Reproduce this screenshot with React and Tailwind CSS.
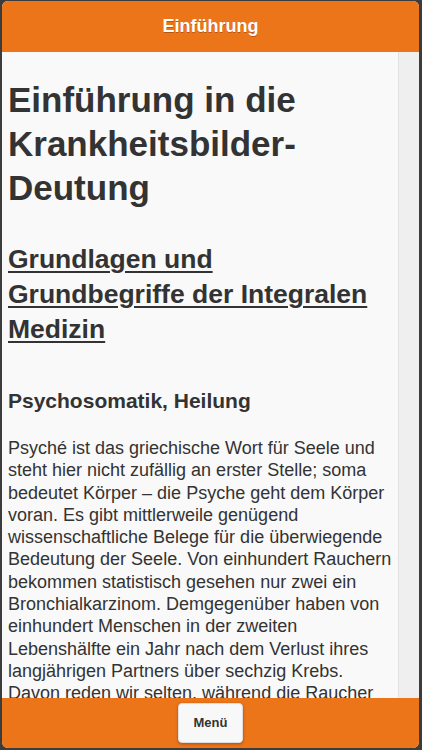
import React from 'react';

const paragraph =
  "Psyché ist das griechische Wort für Seele und steht hier nicht zufällig an erster Stelle; soma bedeutet Körper – die Psyche geht dem Körper voran. Es gibt mittlerweile genügend wissenschaftliche Belege für die überwiegende Bedeutung der Seele. Von einhundert Rauchern bekommen statistisch gesehen nur zwei ein Bronchialkarzinom. Demgegenüber haben von einhundert Menschen in der zweiten Lebenshälfte ein Jahr nach dem Verlust ihres langjährigen Partners über sechzig Krebs. Davon reden wir selten, während die Raucher ständig vor den Gefahren ihres Tuns gewarnt werden.";

const App = () => {
  return (
    <div className="w-[422px] h-[750px] bg-[#3c3c3c] pl-[2px] pr-[3px] pt-px pb-[2px] overflow-hidden font-['Liberation_Sans',Arial,sans-serif]">
      <div className="h-full flex flex-col rounded-md overflow-hidden bg-[#f9f9f9]">
        {/* Kopfzeile */}
        <header className="h-[51px] shrink-0 bg-[#ec7419] flex items-center justify-center">
          <span className="text-white font-bold text-[18px] [text-shadow:0_1px_0_rgba(0,0,0,0.25)]">Einführung</span>
        </header>

        {/* Inhalt */}
        <div className="flex-1 flex min-h-0">
          <main className="flex-1 overflow-hidden pl-[6px] pr-[4px] text-[#333]">
            <h1 className="mt-[26px] text-[35px] leading-[44px] font-bold">
              Einführung in die Krankheitsbilder-Deutung
            </h1>
            <h2 className="mt-[32px] text-[26.5px] leading-[35px] font-bold underline decoration-2 underline-offset-[3px]">
              Grundlagen und Grundbegriffe der Integralen Medizin
            </h2>
            <h3 className="mt-[41px] text-[21px] leading-[26px] font-bold">Psychosomatik, Heilung</h3>
            <p className="mt-[23px] text-[18px] leading-[22.3px]">{paragraph}</p>
          </main>
          <div className="w-[21px] shrink-0 bg-[#efefef] border-l border-[#e2e2e2]" />
        </div>

        {/* Fußzeile */}
        <footer className="h-[50px] shrink-0 bg-[#ec7419] flex items-center justify-center">
          <button className="w-[65px] h-[40px] rounded-[4px] bg-[#f8f8f8] border border-[#ddd] shadow-[0_1px_3px_rgba(0,0,0,0.3)] text-[13px] font-bold text-[#333]">
            Menü
          </button>
        </footer>
      </div>
    </div>
  );
};

export default App;
